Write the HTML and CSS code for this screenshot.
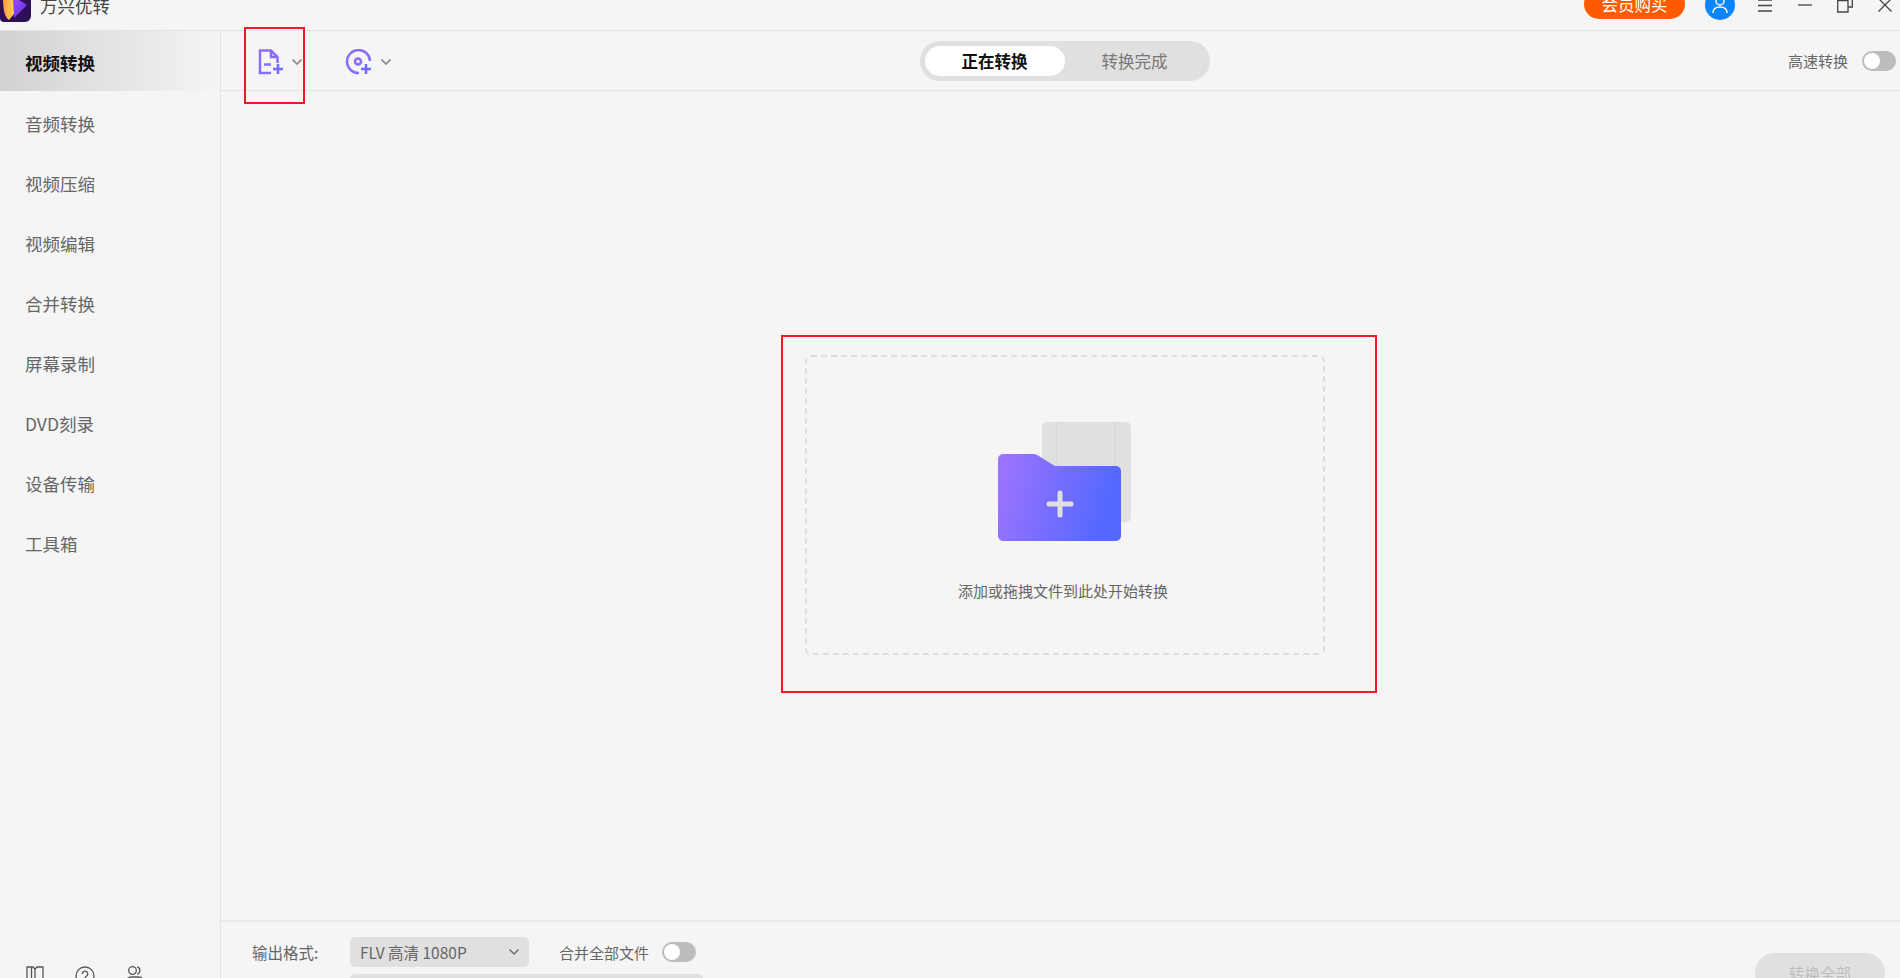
FILE: index.html
```html
<!DOCTYPE html>
<html lang="zh-CN">
<head>
    <meta charset="utf-8">
    <title>万兴优转</title>
    <link rel="stylesheet" href="styles.css">
</head>
<body>
    <div class="app">
        <header class="titleBar">
            <div class="titleRow">
                <svg class="logo" width="31" height="42" viewBox="0 0 31 42">
                    <defs>
                        <linearGradient id="logoLeft" x1="0" y1="0" x2="1" y2="0">
                            <stop offset="0" stop-color="#ff9a3c"/>
                            <stop offset="1" stop-color="#ffd25e"/>
                        </linearGradient>
                        <linearGradient id="logoRight" x1="0" y1="0" x2="1" y2="1">
                            <stop offset="0" stop-color="#a04cf8"/>
                            <stop offset="1" stop-color="#5d2ee0"/>
                        </linearGradient>
                    </defs>
                    <path d="M0 0H31V32a6 6 0 0 1-6 6H4a4 4 0 0 1-4-4Z" fill="#2e0f57"/>
                    <path d="M13 12L27 21L14 34Z" fill="url(#logoRight)"/>
                    <path d="M3 12H13L14 30L9 36C5 33 3 28 3 12Z" fill="url(#logoLeft)"/>
                </svg>
                <span class="appName">万兴优转</span>
                <button class="buyBtn">会员购买</button>
                <span class="avatar">
                    <svg width="18" height="20" viewBox="0 0 18 20" fill="none" stroke="#fff" stroke-width="1.5">
                        <circle cx="9" cy="7" r="4"/>
                        <path d="M2 19c0-4 3-6 7-6s7 2 7 6"/>
                    </svg>
                </span>
                <svg class="winIcon menuIcon" width="14" height="14" viewBox="0 0 14 14" stroke="#444" stroke-width="1.3">
                    <path d="M0 2H14M0 7.500H14M0 13H14"/>
                </svg>
                <svg class="winIcon minIcon" width="14" height="14" viewBox="0 0 14 14" stroke="#444" stroke-width="1.3">
                    <path d="M0 7H14"/>
                </svg>
                <svg class="winIcon restoreIcon" width="16" height="18" viewBox="0 0 16 18" fill="none" stroke="#444" stroke-width="1.3">
                    <path d="M.7 5.700H11V17H.7Z"/>
                    <path d="M5 5.500V1H15.300V12H11"/>
                </svg>
                <svg class="winIcon closeIcon" width="14" height="14" viewBox="0 0 14 14" stroke="#444" stroke-width="1.3">
                    <path d="M.5 .5L13.500 13.500M13.500 .5L.5 13.500"/>
                </svg>
            </div>
        </header>
        <div class="body">
            <aside class="sidebar">
                <nav class="navList">
                    <a class="navItem active">视频转换</a>
                    <a class="navItem">音频转换</a>
                    <a class="navItem">视频压缩</a>
                    <a class="navItem">视频编辑</a>
                    <a class="navItem">合并转换</a>
                    <a class="navItem">屏幕录制</a>
                    <a class="navItem">DVD刻录</a>
                    <a class="navItem">设备传输</a>
                    <a class="navItem">工具箱</a>
                </nav>
                <div class="sideFoot">
                    <svg width="20" height="20" viewBox="0 0 20 20" fill="none" stroke="#555" stroke-width="1.3">
                        <path d="M2 1H8L10 3L12 1H18V18H2ZM10 3V18M6.500 1V18"/>
                    </svg>
                    <svg width="20" height="20" viewBox="0 0 20 20" fill="none" stroke="#555" stroke-width="1.3">
                        <circle cx="10" cy="10" r="9"/>
                        <path d="M7.300 8a2.700 2.700 0 1 1 4 2.300c-1 .6-1.300 1-1.300 2.200M10 14v1.500"/>
                    </svg>
                    <svg width="20" height="20" viewBox="0 0 20 20" fill="none" stroke="#555" stroke-width="1.3">
                        <circle cx="7.500" cy="4.500" r="3.800"/>
                        <path d="M12 .8a3.800 3.800 0 0 1 0 7.400M1.500 16c0-3.500 2-5 5-5h7c3 0 5 1.500 5 5"/>
                    </svg>
                </div>
            </aside>
            <main class="main">
                <div class="toolbar">
                    <div class="toolIcons">
                        <div class="toolBtn">
                            <svg width="26" height="26" viewBox="0 0 26 26" fill="none" stroke="#8a6cff" stroke-width="2.5">
                                <path d="M13 24H2V1.500H13L19.500 8V14"/>
                                <path d="M13 1.500V8H19.500M6 15.500H13"/>
                                <path d="M20 15V25M15 20H25" stroke="#6f6cff"/>
                            </svg>
                            <svg class="chevron" width="10" height="6" viewBox="0 0 10 6" fill="none" stroke="#888" stroke-width="1.6">
                                <path d="M.5 .5L5 5L9.500 .5"/>
                            </svg>
                        </div>
                        <div class="toolBtn">
                            <svg width="28" height="26" viewBox="0 0 28 26" fill="none" stroke="#8a6cff" stroke-width="2.5">
                                <path d="M14 24A11.500 11.500 0 1 1 25 12"/>
                                <circle cx="13" cy="12.500" r="3"/>
                                <path d="M21 15V25M16 20H26" stroke="#6f6cff"/>
                            </svg>
                            <svg class="chevron" width="10" height="6" viewBox="0 0 10 6" fill="none" stroke="#888" stroke-width="1.6">
                                <path d="M.5 .5L5 5L9.500 .5"/>
                            </svg>
                        </div>
                    </div>
                    <div class="tabs">
                        <span class="tab current">正在转换</span>
                        <span class="tab">转换完成</span>
                    </div>
                    <div class="speed">
                        <span>高速转换</span>
                        <span class="toggle"><i></i></span>
                    </div>
                </div>
                <div class="workArea">
                    <div class="dropZone">
                        <svg class="folderArt" width="134" height="120" viewBox="0 0 134 120">
                            <defs>
                                <linearGradient id="folderFill" x1="0" y1="0" x2="1" y2="0.2">
                                    <stop offset="0" stop-color="#a074ff"/>
                                    <stop offset="1" stop-color="#5268ff"/>
                                </linearGradient>
                            </defs>
                            <rect x="44" y="0" width="89" height="100" rx="5" fill="#e0e0e0"/>
                            <path d="M58.500 0V45M117 0V100" stroke="#d6d6d6" stroke-width="1"/>
                            <path d="M5 32H36Q38 32 40 33.500L57 44H118a5 5 0 0 1 5 5V114a5 5 0 0 1-5 5H5a5 5 0 0 1-5-5V37a5 5 0 0 1 5-5Z" fill="url(#folderFill)"/>
                            <path d="M62 71V93M51 82H73" stroke="#e0e0e0" stroke-width="5" stroke-linecap="round"/>
                        </svg>
                        <p class="dropText">添加或拖拽文件到此处开始转换</p>
                    </div>
                </div>
                <footer class="bottomBar">
                    <div class="outputCol">
                        <div class="outputRow">
                            <span class="outputLabel">输出格式:</span>
                            <div class="formatSelect">
                                <span>FLV 高清 1080P</span>
                                <svg width="10" height="6" viewBox="0 0 10 6" fill="none" stroke="#666" stroke-width="1.3">
                                    <path d="M.5 .5L5 5L9.500 .5"/>
                                </svg>
                            </div>
                            <span class="mergeLabel">合并全部文件</span>
                            <span class="toggle"><i></i></span>
                        </div>
                        <div class="pathSelect"></div>
                    </div>
                    <button class="convertAll">转换全部</button>
                </footer>
            </main>
        </div>
        <div class="markBox markTool"></div>
        <div class="markBox markDrop"></div>
    </div>
</body>
</html>
```

FILE: styles.css
```css
* {
    box-sizing: border-box;
}
body {
    margin: 0;
    background-color: #f5f5f5;
    font-family: "Noto Sans CJK SC", "Noto Sans", sans-serif;
    color: #666;
}
.app {
    position: relative;
    height: 978px;
    display: flex;
    flex-direction: column;
    overflow: hidden;
}
.titleBar {
    height: 31px;
    flex: none;
    border-bottom: 1px solid #e3e3e3;
}
.titleRow {
    height: 42px;
    margin-top: -16px;
    display: flex;
    align-items: center;
}
.logo {
    flex: none;
}
.appName {
    margin-left: 9px;
    font-size: 17.5px;
    color: #444;
}
.buyBtn {
    margin-left: auto;
    width: 101px;
    height: 30px;
    margin-top: -2px;
    padding: 0;
    border: none;
    border-radius: 15px;
    background-color: #ff5a00;
    color: #fff;
    font-family: inherit;
    font-size: 16.5px;
    line-height: 30px;
}
.avatar {
    margin-left: 20px;
    width: 30px;
    height: 30px;
    border-radius: 50%;
    background-color: #0a84ff;
    display: flex;
    align-items: flex-start;
    justify-content: center;
    padding-top: 4px;
}
.winIcon {
    flex: none;
}
.menuIcon {
    margin-left: 23px;
}
.minIcon {
    margin-left: 26px;
}
.restoreIcon {
    margin-left: 25px;
    margin-top: -3px;
}
.closeIcon {
    margin-left: 25px;
    margin-right: 8px;
}
.body {
    flex: 1;
    display: flex;
    min-height: 0;
}
.sidebar {
    width: 221px;
    flex: none;
    border-right: 1px solid #e3e3e3;
    display: flex;
    flex-direction: column;
}
.navList {
    flex: 1;
    display: flex;
    flex-direction: column;
}
.navItem {
    height: 60px;
    padding: 2px 0 0 25px;
    display: flex;
    align-items: center;
    font-size: 17.5px;
    color: #666;
}
.navItem.active {
    margin-bottom: 1.5px;
    background: linear-gradient(90deg, #d2d2d2, #f5f5f5);
    color: #111;
    font-weight: 700;
}
.sideFoot {
    height: 12px;
    padding-left: 25px;
    display: flex;
    gap: 30px;
}
.main {
    flex: 1;
    min-width: 0;
    display: flex;
    flex-direction: column;
}
.toolbar {
    height: 60px;
    flex: none;
    border-bottom: 1px solid #e3e3e3;
    display: grid;
    grid-template-columns: 1fr auto 1fr;
    align-items: center;
}
.toolIcons {
    display: flex;
    gap: 43px;
    padding: 2px 0 0 37px;
}
.toolBtn {
    display: flex;
    align-items: center;
    gap: 8px;
}
.tabs {
    width: 290px;
    height: 40px;
    padding: 5px;
    margin-left: 8px;
    border-radius: 20px;
    background-color: #e0e0e0;
    display: flex;
}
.tab {
    flex: none;
    width: 140px;
    border-radius: 15px;
    display: flex;
    align-items: center;
    justify-content: center;
    font-size: 16.5px;
    color: #777;
}
.tab.current {
    background-color: #fff;
    color: #111;
    font-weight: 700;
}
.speed {
    display: flex;
    justify-content: flex-end;
    align-items: center;
    gap: 14px;
    padding-right: 4px;
    font-size: 15px;
    color: #666;
}
.toggle {
    flex: none;
    width: 34px;
    height: 20px;
    padding: 2px;
    border-radius: 10px;
    background-color: #bcbcbc;
    display: block;
}
.toggle i {
    display: block;
    width: 16px;
    height: 16px;
    border-radius: 50%;
    background-color: #fff;
}
.workArea {
    flex: 1;
    min-height: 0;
    padding-top: 264px;
    padding-left: 584px;
}
.dropZone {
    width: 520px;
    height: 300px;
    border: 2px dashed #dedede;
    border-radius: 6px;
    padding-top: 65px;
    display: flex;
    flex-direction: column;
    align-items: center;
}
.folderArt {
    display: block;
}
.dropText {
    margin: 38px 0 0 -4px;
    font-size: 15px;
    line-height: 22px;
    color: #666;
}
.bottomBar {
    height: 58px;
    flex: none;
    border-top: 2px solid #e9e9e9;
    padding: 15px 15px 0 31px;
    display: flex;
    justify-content: space-between;
    overflow: hidden;
}
.outputCol {
    width: 483px;
    flex: none;
}
.outputRow {
    display: flex;
    align-items: center;
    height: 30px;
}
.outputLabel {
    width: 98px;
    flex: none;
    font-size: 15.5px;
}
.formatSelect {
    width: 179px;
    height: 30px;
    flex: none;
    padding: 0 10px;
    border-radius: 5px;
    background-color: #e0e0e0;
    display: flex;
    align-items: center;
    justify-content: space-between;
    font-size: 15.5px;
    color: #666;
}
.mergeLabel {
    margin-left: 30px;
    margin-right: 13px;
    font-size: 15px;
}
.pathSelect {
    margin: 7px 0 0 98px;
    width: 353px;
    height: 30px;
    border-radius: 5px;
    background-color: #e0e0e0;
}
.convertAll {
    width: 130px;
    height: 40px;
    margin-top: 16px;
    padding: 0;
    border: none;
    border-radius: 20px;
    background-color: #e0e0e0;
    color: #bdbdbd;
    font-family: inherit;
    font-size: 15.5px;
}
.markBox {
    position: absolute;
    border: 2px solid #ed1c24;
}
.markTool {
    left: 244px;
    top: 27px;
    width: 61px;
    height: 77px;
}
.markDrop {
    left: 781px;
    top: 335px;
    width: 596px;
    height: 358px;
}
```
